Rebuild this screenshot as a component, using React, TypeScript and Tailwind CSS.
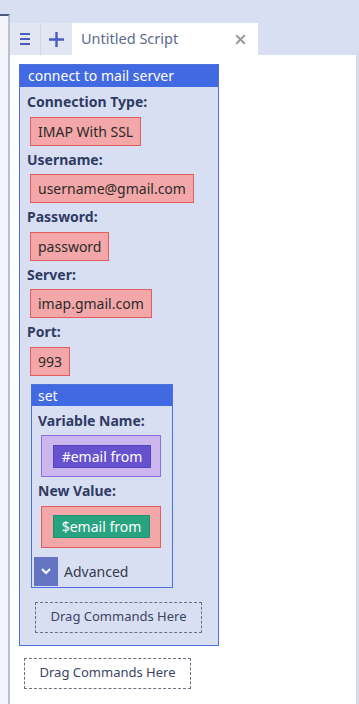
import React from 'react';
import { X } from 'lucide-react';

const font = { fontFamily: '"Noto Sans", "Open Sans", sans-serif' };

const Label: React.FC<{ text: string; top?: string }> = ({ text, top = 'mt-1' }) => (
  <div className={`h-5 leading-5 ${top} mb-[4.5px] text-[14px] font-bold text-[#2f3b63] whitespace-nowrap`}>{text}</div>
);

const Value: React.FC<{ text: string }> = ({ text }) => (
  <div className="ml-[3px] self-start h-[29px] px-[7px] flex items-center bg-[#f3a7a8] border border-[#e35d5f] text-[14px] text-[#2b2b2b] whitespace-nowrap">
    {text}
  </div>
);

const DropZone: React.FC<{ className?: string }> = ({ className = '' }) => (
  <div
    className={`h-[31px] flex items-center justify-center border border-dashed border-[#6b7080] text-[13px] text-[#3b4563] ${className}`}
  >
    Drag Commands Here
  </div>
);

export default function App() {
  return (
    <div className="w-[359px] h-[704px] bg-[#d9dff2] flex overflow-hidden" style={font}>
      {/* left pane edge */}
      <div className="w-[10px] flex flex-col shrink-0">
        <div className="h-[14px]" />
        <div className="flex-1 bg-[#f4f5fa] border-t-2 border-t-[#4b5a7a] border-r-2 border-r-[#b9c0cf]" />
      </div>

      <div className="flex-1 flex flex-col">
        {/* tab strip */}
        <div className="h-[55px] flex items-end">
          <div className="h-[32px] flex items-stretch">
            <div className="w-[31px] bg-[#e2e6f3] border-r border-[#cfd5e6] flex items-center justify-center">
              <div className="flex flex-col gap-[3px]">
                <div className="w-[10px] h-[2px] bg-[#4a5cc2]" />
                <div className="w-[10px] h-[2px] bg-[#4a5cc2]" />
                <div className="w-[10px] h-[2px] bg-[#4a5cc2]" />
              </div>
            </div>
            <div className="w-[31px] bg-[#e2e6f3] flex items-center justify-center">
              <svg width="17" height="17" viewBox="0 0 17 17">
                <path d="M8.5 1v15M1 8.5h15" stroke="#4a5cc2" strokeWidth="2.4" />
              </svg>
            </div>
            <div className="w-[186px] bg-white flex items-center pl-[9px] pr-[10px]">
              <span className="flex-1 text-[14.5px] text-[#5b6a8e]">Untitled Script</span>
              <X className="w-[15px] h-[15px] text-[#9a9a9a]" strokeWidth={3} />
            </div>
          </div>
        </div>

        {/* script area */}
        <div className="flex-1 bg-white border-r-2 border-[#d7d9de] mr-[1px] pt-[9px] pl-[9px]">
          <div className="w-[200px] border border-[#4f70dc] bg-[#d9dff3]">
            <div className="h-[22px] bg-[#4169e1] text-white text-[14px] leading-[22px] pl-[8px]">
              connect to mail server
            </div>
            <div className="flex flex-col pl-[7px] pt-[1px] pb-[12px]">
              <Label text="Connection Type:" />
              <Value text="IMAP With SSL" />
              <Label text="Username:" />
              <Value text="username@gmail.com" />
              <Label text="Password:" />
              <Value text="password" />
              <Label text="Server:" />
              <Value text="imap.gmail.com" />
              <Label text="Port:" />
              <Value text="993" />

              <div className="mt-[8px] ml-[4px] w-[142px] border border-[#4f70dc] bg-[#d9dff3]">
                <div className="h-[21px] bg-[#4169e1] text-white text-[14px] leading-[21px] pl-[6px]">set</div>
                <div className="flex flex-col pl-[6px] pb-[1px]">
                  <Label text="Variable Name:" top="mt-[5px]" />
                  <div className="ml-[3px] w-[120px] h-[42px] bg-[#cbb7ee] border border-[#8a6fe0] flex items-center pl-[11px]">
                    <div className="w-[98px] h-[23px] bg-[#6651cf] border border-[#5a44c4] text-white text-[14px] flex items-center justify-center">
                      #email from
                    </div>
                  </div>
                  <Label text="New Value:" />
                  <div className="ml-[3px] w-[120px] h-[42px] bg-[#f3a7a8] border border-[#e35d5f] flex items-center pl-[11px]">
                    <div className="w-[97px] h-[23px] bg-[#27a47f] border border-[#1f9170] text-white text-[14px] flex items-center justify-center">
                      $email from
                    </div>
                  </div>
                  <div className="mt-[9px] -ml-[4px] flex items-center gap-[6px]">
                    <div className="w-[24px] h-[29px] bg-[#6474c2] flex items-center justify-center">
                      <svg width="12" height="8" viewBox="0 0 12 8">
                        <path d="M2 2l4 4 4-4" fill="none" stroke="white" strokeWidth="2" />
                      </svg>
                    </div>
                    <span className="text-[14px] text-[#333b4d]">Advanced</span>
                  </div>
                </div>
              </div>

              <DropZone className="mt-[14px] ml-[8px] w-[167px]" />
            </div>
          </div>

          <DropZone className="mt-[12px] ml-[5px] w-[167px]" />
        </div>
      </div>
    </div>
  );
}
